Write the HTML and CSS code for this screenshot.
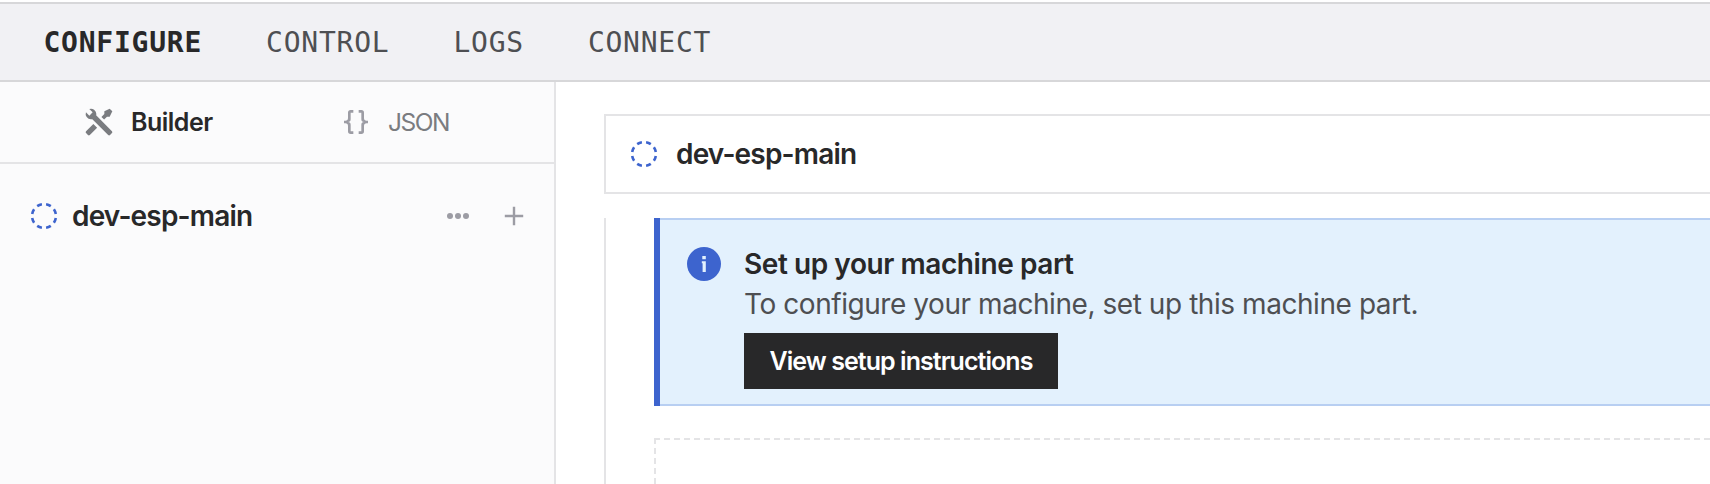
FILE: index.html
```html
<!DOCTYPE html>
<html lang="en">
<head>
<meta charset="utf-8">
<title>dev-esp-main</title>
<link rel="stylesheet" href="styles.css">
</head>
<body>
<nav class="nav">
  <a class="nav-item active">CONFIGURE</a>
  <a class="nav-item">CONTROL</a>
  <a class="nav-item">LOGS</a>
  <a class="nav-item">CONNECT</a>
</nav>
<div class="layout">
  <aside class="sidebar">
    <div class="modes">
      <div class="mode selected">
        <svg class="icon" viewBox="0 0 24 24"><path d="M21.71 20.29L20.29 21.71A1 1 0 0 1 18.88 21.71L7 9.85A3.81 3.81 0 0 1 6 10A4 4 0 0 1 2.22 4.7L4.76 7.24L5.29 6.71L6.71 5.29L7.24 4.76L4.7 2.22A4 4 0 0 1 10 6A3.81 3.81 0 0 1 9.85 7L21.71 18.88A1 1 0 0 1 21.71 20.29M2.29 18.88A1 1 0 0 0 2.29 20.29L3.71 21.71A1 1 0 0 0 5.12 21.71L10.59 16.25L7.76 13.42M20 2L16 4V6L13.83 8.17L15.83 10.17L18 8H20L22 4Z"/></svg>
        <span class="builder-label">Builder</span>
      </div>
      <div class="mode json">
        <svg class="icon" viewBox="0 0 24 24"><path d="M8 3A2 2 0 0 0 6 5V9A2 2 0 0 1 4 11H3V13H4A2 2 0 0 1 6 15V19A2 2 0 0 0 8 21H10V19H8V14A2 2 0 0 0 6 12A2 2 0 0 0 8 10V5H10V3M16 3A2 2 0 0 1 18 5V9A2 2 0 0 0 20 11H21V13H20A2 2 0 0 0 18 15V19A2 2 0 0 1 16 21H14V19H16V14A2 2 0 0 1 18 12A2 2 0 0 1 16 10V5H14V3H16Z"/></svg>
        <span class="json-label">JSON</span>
      </div>
    </div>
    <div class="part-row">
      <svg class="status" viewBox="0 0 28 28"><circle cx="14" cy="14" r="12" pathLength="80"/></svg>
      <span class="part-name">dev-esp-main</span>
      <svg class="more" viewBox="0 0 24 24"><circle cx="4" cy="12" r="3"/><circle cx="12" cy="12" r="3"/><circle cx="20" cy="12" r="3"/></svg>
      <svg class="add" viewBox="0 0 20 20"><path d="M10 .8V19.2M.8 10H19.2"/></svg>
    </div>
  </aside>
  <main class="main">
    <header class="card-head">
      <svg class="status" viewBox="0 0 28 28"><circle cx="14" cy="14" r="12" pathLength="80"/></svg>
      <span class="part-name">dev-esp-main</span>
    </header>
    <section class="card-body">
      <div class="banner">
        <svg class="info" viewBox="0 0 34 34"><circle cx="17" cy="17" r="17"/><path d="M15.3 9h3.5v3.2h-3.5zM14.8 14.3h4V25h-3.2V16.2h-.8z"/></svg>
        <div class="banner-text">
          <strong class="banner-title">Set up your machine part</strong>
          <p class="banner-copy">To configure your machine, set up this machine part.</p>
          <button class="setup">View setup instructions</button>
        </div>
      </div>
      <div class="dropzone"></div>
    </section>
  </main>
</div>
</body>
</html>
```
FILE: styles.css
```css
* { box-sizing: border-box; }
body {
  margin: 0;
  padding-top: 2px;
  height: 484px;
  overflow: hidden;
  background: #fff;
  color: #282829;
  font-family: Inter, "Liberation Sans", sans-serif;
  font-size: 28px;
}
svg { display: block; flex: none; }
.nav {
  display: flex;
  align-items: center;
  gap: 64px;
  height: 80px;
  padding: 2px 43.5px 0;
  border-top: 2px solid #d7d7d9;
  border-bottom: 2px solid #d7d7d9;
  background: #f1f1f4;
  font-family: "DejaVu Sans Mono", monospace;
  font-size: 28px;
  line-height: 40px;
  letter-spacing: 0.76px;
}
.nav-item { color: #4e4f52; }
.nav-item.active { color: #282829; font-weight: 700; }
.layout { display: flex; height: 402px; }
.sidebar {
  flex: none;
  width: 556px;
  border-right: 2px solid #e4e4e6;
  background: #fbfbfc;
}
.modes {
  display: flex;
  height: 82px;
  padding-left: 83px;
  border-bottom: 2px solid #e4e4e6;
  font-size: 25px;
}
.mode { display: flex; align-items: center; gap: 16px; width: 257px; }
.mode.selected { font-weight: 600; letter-spacing: -0.5px; }
.mode.json { color: #7a7c80; width: 200px; }
.json-label { font-size: 24.5px; letter-spacing: -1.5px; }
.icon { width: 32px; height: 32px; fill: #7a7c80; }
.json .icon { fill: #9c9ca4; }
.part-row {
  display: flex;
  align-items: center;
  height: 64px;
  margin-top: 20px;
  padding: 0 30px;
}
.status { width: 28px; height: 28px; }
.status circle {
  fill: none;
  stroke: #3d64ce;
  stroke-width: 2.6;
  stroke-dasharray: 5.4 4.6;
  stroke-dashoffset: -2.3;
}
.part-name { font-weight: 600; line-height: 40px; letter-spacing: -0.82px; }
.part-row .part-name { margin: 0 auto 0 14px; }
.more { width: 24px; height: 24px; fill: #9c9ca4; }
.add { width: 20px; height: 20px; margin-left: 34px; fill: none; stroke: #9c9ca4; stroke-width: 2.4; }
.main { flex: 1; min-width: 0; padding: 32px 0 0 48px; }
.card-head {
  display: flex;
  align-items: center;
  gap: 18px;
  height: 80px;
  padding-left: 24px;
  border: 2px solid #e4e4e6;
  border-right: 0;
}
.card-body {
  height: 266px;
  margin-top: 24px;
  padding-left: 48px;
  border-left: 2px solid #e4e4e6;
}
.banner {
  display: flex;
  gap: 23px;
  height: 188px;
  padding: 26px 0 0 27px;
  border-left: 6px solid #3d64ce;
  background: #e3f1fd;
  box-shadow: inset 0 2px #b8cff2, inset 0 -2px #b8cff2;
}
.info { width: 34px; height: 34px; margin-top: 3px; fill: #3d64ce; }
.info path { fill: #e3f1fd; }
.banner-text { display: flex; flex-direction: column; align-items: flex-start; }
.banner-title { font-weight: 600; line-height: 40px; letter-spacing: -0.43px; }
.banner-copy { margin: 0; color: #4e4f52; line-height: 40px; letter-spacing: -0.44px; }
.setup {
  width: 314px;
  height: 56px;
  margin-top: 9px;
  padding: 0;
  border: 0;
  background: #282829;
  color: #fff;
  font: 600 25px/56px Inter, "Liberation Sans", sans-serif;
  letter-spacing: -0.95px;
  white-space: nowrap;
}
.dropzone {
  height: 46px;
  margin-top: 32px;
  border: 2px dashed #e4e4e6;
  border-right: 0;
  border-bottom: 0;
}
```
